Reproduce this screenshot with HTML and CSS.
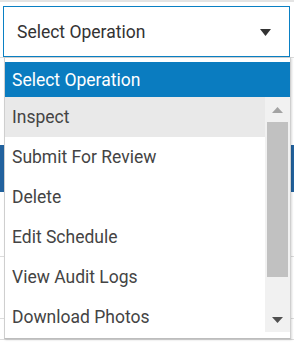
FILE: index.html
```html
<!DOCTYPE html>
<html>
  <head>
    <title>Select Operation</title>
    <link rel="stylesheet" href="styles.css">
  </head>
  <body>
    <div class="backdrop">
      <div class="line line-top"></div>
      <div class="line line-1"></div>
      <div class="band"></div>
      <div class="line line-2"></div>
      <div class="line line-3"></div>
      <div class="line line-4"></div>
    </div>

    <div class="picker">
      <div class="select-box">
        <span>Select Operation</span>
        <svg class="caret" width="11" height="7" viewBox="0 0 11 7">
          <polygon points="0,0 11,0 5.5,7" fill="#333" />
        </svg>
      </div>

      <div class="dropdown">
        <div class="option-head">Select Operation</div>
        <div class="list-wrap">
          <div class="options">
            <div class="option active">Inspect</div>
            <div class="option">Submit For Review</div>
            <div class="option">Delete</div>
            <div class="option">Edit Schedule</div>
            <div class="option">View Audit Logs</div>
            <div class="option">Download Photos</div>
          </div>
          <div class="scrollbar">
            <div class="scroll-btn">
              <svg width="11" height="6" viewBox="0 0 11 6">
                <polygon points="0,6 11,6 5.5,0" fill="#a3a3a3" />
              </svg>
            </div>
            <div class="thumb"></div>
            <div class="scroll-space"></div>
            <div class="scroll-btn">
              <svg width="11" height="6" viewBox="0 0 11 6">
                <polygon points="0,0 11,0 5.5,6" fill="#505050" />
              </svg>
            </div>
          </div>
        </div>
      </div>
    </div>
  </body>
</html>
```

FILE: styles.css
```css
body {
  margin: 0;
  width: 294px;
  height: 342px;
  overflow: hidden;
  background: #fff;
  font-family: Roboto, "Noto Sans", sans-serif;
  position: relative;
}

.backdrop {
  display: flex;
  flex-direction: column;
}

.line {
  height: 1px;
  background: #dcdcdc;
}

.line-top {
  height: 2px;
  background: #e4e4e4;
}

.line-1 {
  margin-top: 55px;
}

.band {
  margin-top: 87px;
  height: 47px;
  background: #22629e;
}

.line-2 {
  margin-top: 64px;
}

.line-3 {
  margin-top: 61px;
}

.line-4 {
  margin-top: 20px;
}

.picker {
  position: absolute;
  top: 6px;
  left: 3px;
  width: 287px;
}

.select-box {
  box-sizing: border-box;
  height: 51px;
  border: 1px solid #0a80c4;
  background: #fff;
  display: flex;
  align-items: center;
  justify-content: space-between;
  padding: 1px 18px 0 13px;
  font-size: 17.5px;
  color: #333;
}

.caret {
  display: block;
  margin-top: 1px;
}

.dropdown {
  position: absolute;
  top: 51px;
  left: 1px;
  width: 287px;
  box-sizing: border-box;
  height: 282px;
  border: 1px solid #cfcfcf;
  border-bottom-color: #bdbdbd;
  background: #fff;
  padding-top: 4px;
  box-shadow: 1px 1px 2px rgba(0, 0, 0, 0.15);
}

.option-head {
  height: 35px;
  line-height: 36px;
  background: #0a7cc0;
  color: #fff;
  font-size: 17.5px;
  padding-left: 7px;
}

.list-wrap {
  display: flex;
  height: 240px;
  overflow: hidden;
}

.options {
  flex: 1;
}

.option {
  height: 40px;
  line-height: 41px;
  padding-left: 7px;
  font-size: 17.5px;
  color: #444;
}

.option.active {
  background: #e9e9e9;
}

.scrollbar {
  width: 25px;
  height: 235px;
  background: #f1f1f1;
  display: flex;
  flex-direction: column;
}

.scroll-btn {
  height: 25px;
  display: flex;
  align-items: center;
  justify-content: center;
}

.scroll-btn svg {
  display: block;
}

.thumb {
  height: 155px;
  margin: 0 2px;
  background: #c1c1c1;
}

.scroll-space {
  flex: 1;
}
```
